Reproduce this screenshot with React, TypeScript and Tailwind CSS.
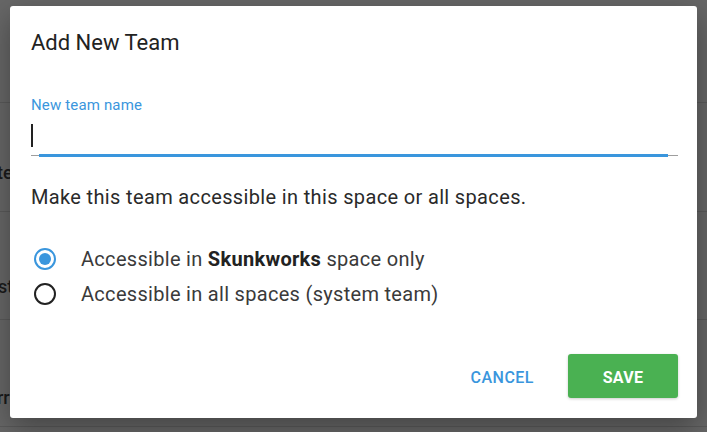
import { useState } from "react";

function Radio({ checked }: { checked: boolean }) {
  return (
    <span
      className={`w-[22px] h-[22px] rounded-full border-2 flex items-center justify-center shrink-0 ${
        checked ? "border-[#3a96dd]" : "border-[#222]"
      }`}
    >
      {checked && <span className="w-[12px] h-[12px] rounded-full bg-[#3a96dd]" />}
    </span>
  );
}

export default function App() {
  const [scope, setScope] = useState("space");

  return (
    <div className="relative w-[707px] h-[432px] overflow-hidden bg-[#676767] font-['Roboto',sans-serif]">
      {/* background page, dimmed */}
      <div className="flex flex-col text-[18px] font-medium text-[#1b1b1b] leading-[24px]">
        <div className="h-[103px] border-b border-[#5a5a5a]" />
        <div className="h-[109px] border-b border-[#5a5a5a] pt-[58px]">
          <span className="-ml-[3px]">te</span>
        </div>
        <div className="h-[108px] border-b border-[#5a5a5a] pt-[63px]">
          <span className="-ml-[2px]">st</span>
        </div>
        <div className="h-[107px] border-b border-[#5a5a5a] pt-[66px]">
          <span className="-ml-[3px]">rr</span>
        </div>
      </div>

      {/* dialog */}
      <div className="absolute left-[10px] top-[6px] w-[687px] h-[412px] bg-white rounded-[3px] shadow-[0_10px_30px_rgba(0,0,0,0.35)] flex flex-col pl-[21px] pr-[19px]">
        <h2 className="pt-[22px] text-[22px] leading-[30px] text-[#222]">Add New Team</h2>

        <div className="mt-[39px] flex flex-col">
          <label className="text-[15px] leading-[16px] tracking-[0.15px] text-[#3a96dd]">New team name</label>
          <div className="h-[33px] flex items-center mt-[6px]">
            <span className="w-[2px] h-[23px] bg-[#222]" />
          </div>
          <div className="relative h-[3px] mt-[2px]">
            <div className="absolute left-0 right-0 top-[1px] h-px bg-[#9e9e9e]" />
            <div className="absolute left-[8px] right-[10px] top-0 h-[3px] bg-[#3a96dd]" />
          </div>
        </div>

        <p className="mt-[28px] text-[20px] leading-[24px] tracking-[0.35px] text-[#2a2a2a]">
          Make this team accessible in this space or all spaces.
        </p>

        <div className="mt-[38px] flex flex-col gap-[11px] text-[20px] tracking-[0.3px] text-[#3a3a3a]">
          <label className="flex items-center gap-[25px] pl-[3px] h-[24px] cursor-pointer" onClick={() => setScope("space")}>
            <Radio checked={scope === "space"} />
            <span>
              Accessible in <b className="font-bold text-[#222]">Skunkworks</b> space only
            </span>
          </label>
          <label className="flex items-center gap-[25px] pl-[3px] h-[24px] cursor-pointer" onClick={() => setScope("all")}>
            <Radio checked={scope === "all"} />
            <span>Accessible in all spaces (system team)</span>
          </label>
        </div>

        <div className="mt-auto mb-[20px] flex justify-end items-center gap-[17px]">
          <button className="h-[44px] pt-[3px] px-[17px] text-[16px] font-medium tracking-[0.5px] text-[#3a96dd] uppercase">Cancel</button>
          <button className="w-[110px] h-[44px] pt-[3px] rounded-[3px] bg-[#4ab152] text-white text-[16px] font-bold tracking-[0.3px] uppercase shadow-[0_1px_3px_rgba(0,0,0,0.2)]">
            Save
          </button>
        </div>
      </div>
    </div>
  );
}
